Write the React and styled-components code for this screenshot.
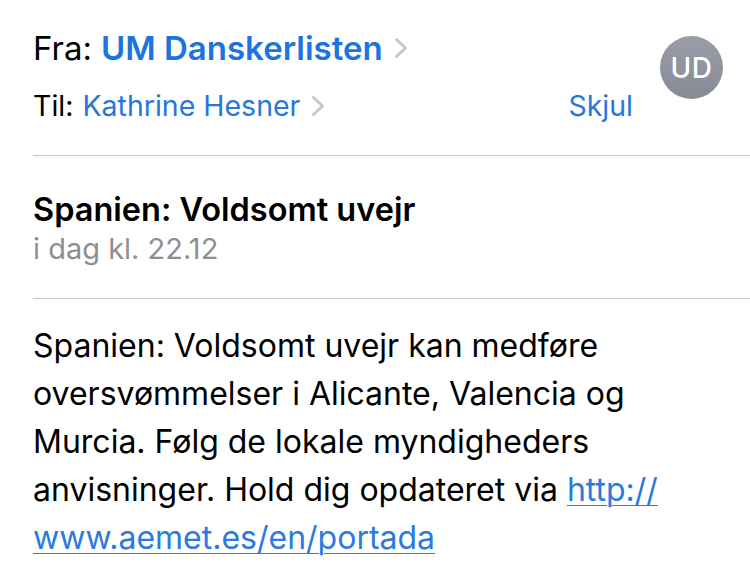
import React from "react";
import styled, { createGlobalStyle } from "styled-components";

const Global = createGlobalStyle`
  html, body { margin: 0; padding: 0; background: #ffffff; }
  body { font-family: "Inter", "Liberation Sans", sans-serif; -webkit-font-smoothing: antialiased; }
`;

const Page = styled.div`
  width: 750px;
  height: 578px;
  overflow: hidden;
  background: #fff;
  padding-left: 33px;
  box-sizing: border-box;
`;

const Header = styled.header`
  display: flex;
  align-items: flex-start;
  padding: 28px 27px 32px 0;
  border-bottom: 1px solid #c8c8cc;
`;

const Addresses = styled.div`
  flex: 1;
  display: flex;
  flex-direction: column;
`;

const AddressRow = styled.div`
  display: flex;
  align-items: center;
  justify-content: space-between;
  margin-top: ${(p) => (p.$first ? "0" : "21px")};
  font-size: ${(p) => (p.$first ? "33px" : "28.5px")};
  line-height: ${(p) => (p.$first ? "40px" : "34px")};
  color: #000;
`;

const Who = styled.div`
  display: flex;
  align-items: center;
  white-space: nowrap;
`;

const Name = styled.span`
  color: ${(p) => (p.$bold ? "#1b74df" : "#2677d8")};
  font-weight: ${(p) => (p.$bold ? 600 : 400)};
  margin-left: 9px;
`;

const Chevron = styled.svg`
  margin-left: ${(p) => p.$gap};
  flex: none;
`;

const HideLink = styled.span`
  color: #2677d8;
`;

const Avatar = styled.div`
  width: 63px;
  height: 63px;
  border-radius: 50%;
  margin-top: 8px;
  margin-left: 27px;
  background: linear-gradient(180deg, #9a9ca6 0%, #878a95 100%);
  color: #fff;
  display: flex;
  align-items: center;
  justify-content: center;
  font-size: 28px;
  font-weight: 500;
  letter-spacing: 0.5px;
  flex: none;
`;

const SubjectBlock = styled.section`
  padding: 36px 0 32px 0;
  border-bottom: 1px solid #c8c8cc;
`;

const Subject = styled.div`
  font-size: 32.5px;
  line-height: 36px;
  font-weight: 600;
  color: #000;
`;

const DateLine = styled.div`
  margin-top: 4px;
  font-size: 29px;
  line-height: 34px;
  color: #8e8e93;
`;

const Body = styled.div`
  padding: 23px 20px 0 0;
  font-size: 32px;
  line-height: 48px;
  color: #000;
`;

const Link = styled.a`
  color: #2a7ae0;
  text-decoration: underline;
  text-decoration-thickness: 1px;
  text-underline-offset: 4px;
`;

function ChevronIcon({ gap }) {
  return (
    <Chevron $gap={gap} width={14} height={22} viewBox="0 0 14 22">
      <path d="M2.5 2.5 L11.5 11 L2.5 19.5" fill="none" stroke="#c7c7cc" strokeWidth="3" strokeLinecap="round" strokeLinejoin="round" />
    </Chevron>
  );
}

export default function App() {
  return (
    <>
      <Global />
      <Page>
        <Header>
          <Addresses>
            <AddressRow $first>
              <Who>
                Fra:<Name $bold>UM Danskerlisten</Name>
                <ChevronIcon gap="11px" />
              </Who>
            </AddressRow>
            <AddressRow>
              <Who>
                Til:<Name>Kathrine Hesner</Name>
                <ChevronIcon gap="11px" />
              </Who>
              <HideLink>Skjul</HideLink>
            </AddressRow>
          </Addresses>
          <Avatar>UD</Avatar>
        </Header>
        <SubjectBlock>
          <Subject>Spanien: Voldsomt uvejr</Subject>
          <DateLine>i dag kl. 22.12</DateLine>
        </SubjectBlock>
        <Body>
          Spanien: Voldsomt uvejr kan medføre
          <br />
          oversvømmelser i Alicante, Valencia og
          <br />
          Murcia. Følg de lokale myndigheders
          <br />
          anvisninger. Hold dig opdateret via <Link href="#">http://</Link>
          <br />
          <Link href="#">www.aemet.es/en/portada</Link>
        </Body>
      </Page>
    </>
  );
}
